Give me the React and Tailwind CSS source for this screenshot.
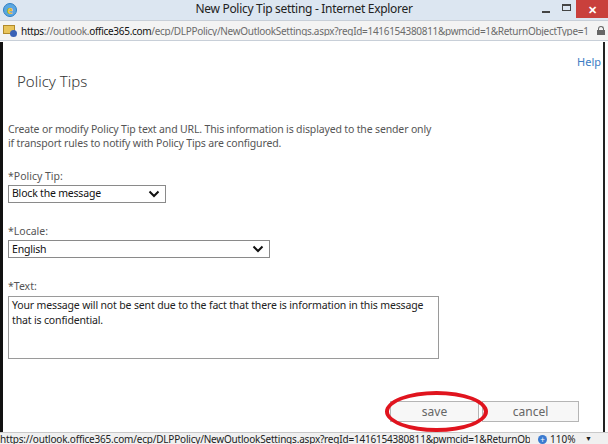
import React from "react";

function Chevron() {
  return (
    <svg width="12" height="8" viewBox="0 0 12 8" className="shrink-0">
      <path d="M1.5 1.5 L6 6 L10.5 1.5" fill="none" stroke="#111" strokeWidth="2" />
    </svg>
  );
}

function Select({ value, width }) {
  return (
    <div className={`flex items-center justify-between border border-[#8a8a8a] bg-white h-[18px] pl-[3px] pr-[5px] ${width}`}>
      <span className="text-[10.5px] tracking-[-0.2px] text-[#111] leading-none">{value}</span>
      <Chevron />
    </div>
  );
}

export default function App() {
  return (
    <div className="w-[608px] h-[444px] flex flex-col overflow-hidden bg-white" style={{ fontFamily: '"Noto Sans", "Open Sans", sans-serif' }}>
      {/* Title bar */}
      <div className="h-[20px] bg-[#dce6f1] flex items-center relative shrink-0">
        <div className="ml-[3px] w-[14px] h-[14px] rounded-full bg-[#5aa7e0] border border-[#2f7fc4] flex items-center justify-center">
          <span className="text-[10px] font-bold text-[#f2c230] leading-none">e</span>
        </div>
        <div className="absolute left-0 right-0 top-[3px] text-center text-[12px] tracking-[-0.3px] text-[#222] leading-none pointer-events-none">New Policy Tip setting - Internet Explorer</div>
        <div className="flex-1"></div>
        <div className="flex items-start h-full">
          <div className="w-[20px] h-full flex items-center justify-center">
            <div className="w-[8px] h-[2px] bg-[#444] mt-[4px]"></div>
          </div>
          <div className="w-[20px] h-full flex items-center justify-center">
            <div className="w-[9px] h-[7px] border border-[#444] border-t-[2px] -mt-[6px]"></div>
          </div>
          <div className="w-[32px] h-[18px] bg-[#c9403c] flex items-center justify-center text-white text-[11px] font-bold leading-none">✕</div>
        </div>
      </div>
      {/* Address bar */}
      <div className="h-[21px] bg-[#f3f3f3] border-t border-b border-[#c8cfd8] flex items-center shrink-0">
        <div className="ml-[3px] w-[14px] h-[12px] relative shrink-0">
          <div className="w-[12px] h-[9px] bg-[#e9c45a] border border-[#b18a2a]"></div>
          <div className="absolute right-0 bottom-0 w-[7px] h-[7px] rounded-full bg-[#3a62b5]"></div>
        </div>
        <div className="ml-[4px] text-[10px] tracking-[-0.3px] leading-none whitespace-nowrap text-[#6b6b6b] flex-1 overflow-hidden">
          <span className="text-[#111]">https</span>://outlook.<span className="text-[#111]">office365.com</span>/ecp/DLPPolicy/NewOutlookSettings.aspx?reqId=1416154380811&amp;pwmcid=1&amp;ReturnObjectType=1
        </div>
        <div className="w-[8px] h-[9px] mr-[3px] ml-[6px] relative flex flex-col items-center shrink-0">
          <div className="w-[6px] h-[4px] border border-[#666] border-b-0 rounded-t-full"></div>
          <div className="w-[8px] h-[6px] bg-[#666]"></div>
        </div>
      </div>
      {/* Content */}
      <div className="flex-1 flex min-h-0 pt-[1px]">
        <div className="w-[3px] bg-[#111] shrink-0"></div>
        <div className="flex-1 relative flex flex-col pl-[5px] pr-[2px]">
          <div className="flex justify-end pt-[14px]">
            <span className="text-[11px] text-[#3b7cc4] leading-none">Help</span>
          </div>
          <div className="pl-[9px] mt-[7px] text-[15px] text-[#333] leading-none font-light">Policy Tips</div>
          <div className="mt-[33px] text-[10.5px] tracking-[-0.15px] text-[#555] leading-[14px]">
            Create or modify Policy Tip text and URL. This information is displayed to the sender only<br />
            if transport rules to notify with Policy Tips are configured.
          </div>
          <div className="mt-[21px] text-[10.5px] text-[#555] leading-none">*Policy Tip:</div>
          <div className="mt-[3px]">
            <Select value="Block the message" width="w-[158px]" />
          </div>
          <div className="mt-[23px] text-[10.5px] text-[#555] leading-none">*Locale:</div>
          <div className="mt-[4px]">
            <Select value="English" width="w-[262px]" />
          </div>
          <div className="mt-[23px] text-[10.5px] text-[#555] leading-none">*Text:</div>
          <div className="mt-[4px] w-[431px] h-[63px] border border-[#9a9a9a] px-[3px] pt-[1px] text-[10.5px] tracking-[-0.15px] text-[#222] leading-[15px]">
            Your message will not be sent due to the fact that there is information in this message that is confidential.
          </div>
          <div className="flex-1"></div>
          <div className="flex justify-end gap-[3px] pr-[22px] mb-[10px]">
            <div className="w-[89px] h-[21px] border border-[#b5b5b5] bg-[#f7f7f7] flex items-center justify-center text-[12px] text-[#666] leading-none">save</div>
            <div className="w-[97px] h-[21px] border border-[#b5b5b5] bg-[#f7f7f7] flex items-center justify-center text-[12px] text-[#666] leading-none">cancel</div>
          </div>
          <div className="absolute left-[382px] top-[349px] w-[103px] h-[41px] rounded-[50%] border-[4px] border-[#e0141e]"></div>
        </div>
        <div className="w-[2px] bg-[#222] shrink-0"></div>
        <div className="w-[3px] shrink-0"></div>
      </div>
      {/* Status bar */}
      <div className="h-[12px] bg-[#f0f0f0] border-t border-[#c9c9c9] flex items-start shrink-0 overflow-hidden">
        <div className="w-[530px] shrink-0 text-[10px] tracking-[-0.2px] text-[#222] leading-[13px] whitespace-nowrap overflow-hidden">
          https://outlook.office365.com/ecp/DLPPolicy/NewOutlookSettings.aspx?reqId=1416154380811&amp;pwmcid=1&amp;ReturnObject
        </div>
        <div className="flex items-center gap-[3px] ml-[8px] flex-1">
          <div className="w-[9px] h-[9px] rounded-full bg-[#3a7ad0] text-white text-[8px] leading-[9px] text-center shrink-0">+</div>
          <span className="text-[10px] text-[#222] leading-[12px]">110%</span>
          <span className="ml-auto mr-[16px] text-[7px] text-[#222] leading-[12px]">▼</span>
        </div>
      </div>
    </div>
  );
}
